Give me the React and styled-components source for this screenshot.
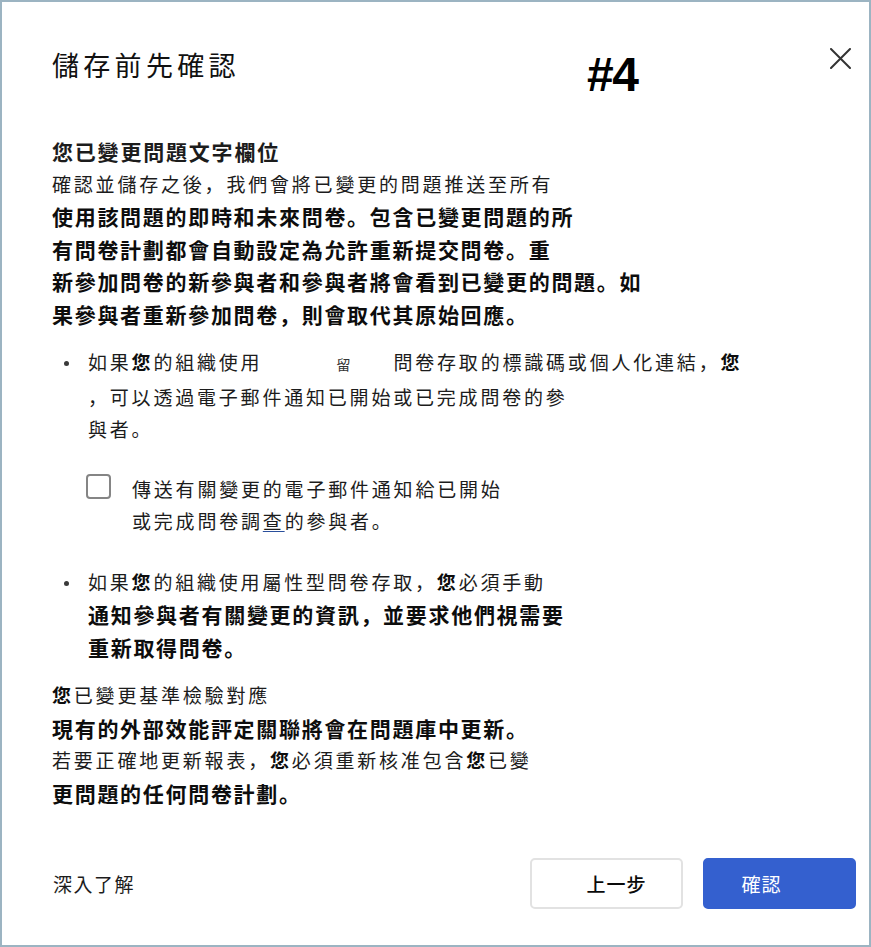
import React, { useState } from "react";
import styled, { createGlobalStyle } from "styled-components";

const GlobalStyle = createGlobalStyle`
  html, body {
    margin: 0;
    padding: 0;
    background: #ffffff;
  }
  body {
    font-family: "Noto Sans CJK JP", "Noto Sans CJK TC", "Noto Sans", sans-serif;
    color: #161616;
  }
`;

const Frame = styled.div`
  width: 871px;
  height: 947px;
  box-sizing: border-box;
  border: 2px solid #9cb4c2;
  display: flex;
  flex-direction: column;
  background: #fff;
`;

const Header = styled.div`
  display: flex;
  align-items: flex-start;
  padding: 43px 18px 0 50px;
`;

const Title = styled.h2`
  flex: 0 0 535px;
  margin: 0;
  font-size: 27px;
  line-height: 40px;
  font-weight: 400;
  letter-spacing: 4.3px;
  color: #111;
`;

const Tag = styled.div`
  margin-top: 6px;
  font-family: "Liberation Sans", Arial, sans-serif;
  font-size: 48px;
  line-height: 1;
  font-weight: 700;
  letter-spacing: -1.5px;
  color: #000;
`;

const Close = styled.button`
  margin-left: auto;
  margin-top: 2px;
  width: 22px;
  height: 22px;
  padding: 0;
  border: none;
  background: none;
  display: flex;
  align-items: center;
  justify-content: center;
  cursor: pointer;
`;

const Body = styled.div`
  padding: 36px 0 0 50px;
`;

const Section = styled.div`
  margin-bottom: ${(p) => p.$gap || 0}px;
`;

const Line = styled.div`
  white-space: nowrap;
  line-height: 32.5px;
  font-size: ${(p) => (p.$strong ? 21 : 19)}px;
  font-weight: ${(p) => (p.$strong ? 700 : 400)};
  letter-spacing: ${(p) => (p.$strong ? 1.7 : 2.8)}px;
  color: ${(p) => (p.$strong ? "#0d0d0d" : "#1c1c1c")};
  b {
    font-weight: 700;
    color: #0d0d0d;
  }
`;

const Heading = styled(Line)`
  font-size: 21px;
  font-weight: 700;
  letter-spacing: 1.8px;
`;

const List = styled.ul`
  list-style: none;
  margin: 0;
  padding: 0;
`;

const Item = styled.li`
  display: grid;
  grid-template-columns: 36px 1fr;
  margin-bottom: ${(p) => p.$gap || 0}px;
`;

const Dot = styled.span`
  width: 5px;
  height: 5px;
  border-radius: 50%;
  background: #3a3a3a;
  margin: 15px 0 0 12px;
`;

const Gap = styled.span`
  display: inline-block;
  width: ${(p) => p.$w}px;
`;

const Faint = styled.span`
  font-size: 14px;
  letter-spacing: 0;
  color: #333;
`;

const CheckRow = styled.label`
  display: flex;
  align-items: flex-start;
  gap: 21px;
  margin: 27px 0 0 -2px;
  cursor: pointer;
`;

const Box = styled.span`
  flex: 0 0 auto;
  width: 25px;
  height: 25px;
  box-sizing: border-box;
  margin-top: 1px;
  border: 2px solid #858585;
  border-radius: 4px;
  background: ${(p) => (p.$on ? "#3460cf" : "#fff")};
  display: flex;
  align-items: center;
  justify-content: center;
`;

const Marked = styled.span`
  text-decoration: underline;
  text-decoration-color: #2a4f9c;
  text-underline-offset: 2px;
`;

const Footer = styled.div`
  margin-top: auto;
  display: flex;
  align-items: center;
  padding: 0 13px 36px 51px;
`;

const LearnMore = styled.a`
  font-size: 19px;
  letter-spacing: 1.5px;
  color: #1c1c1c;
  text-decoration: none;
  cursor: pointer;
`;

const Actions = styled.div`
  margin-left: auto;
  display: flex;
  gap: 20px;
`;

const Button = styled.button`
  width: 153px;
  height: 51px;
  box-sizing: border-box;
  border-radius: 5px;
  font-family: inherit;
  font-size: 19px;
  letter-spacing: 1px;
  cursor: pointer;
  border: 2px solid ${(p) => (p.$primary ? "#3460cf" : "#e2e2e2")};
  background: ${(p) => (p.$primary ? "#3460cf" : "#fff")};
  color: ${(p) => (p.$primary ? "#fff" : "#0a0a0a")};
  font-weight: ${(p) => (p.$primary ? 400 : 500)};
  padding: ${(p) => (p.$primary ? "0 36px 0 0" : "0 0 0 20px")};
`;

export default function App() {
  const [notify, setNotify] = useState(false);

  return (
    <>
      <GlobalStyle />
      <Frame>
        <Header>
          <Title>儲存前先確認</Title>
          <Tag>#4</Tag>
          <Close aria-label="關閉">
            <svg width="21" height="21" viewBox="0 0 21 21">
              <path d="M1 1L20 20M20 1L1 20" stroke="#333" strokeWidth="2" strokeLinecap="round" />
            </svg>
          </Close>
        </Header>

        <Body>
          <Section $gap={16}>
            <Heading>您已變更問題文字欄位</Heading>
            <Line>確認並儲存之後，我們會將已變更的問題推送至所有</Line>
            <Line $strong>使用該問題的即時和未來問卷。包含已變更問題的所</Line>
            <Line $strong>有問卷計劃都會自動設定為允許重新提交問卷。重</Line>
            <Line $strong>新參加問卷的新參與者和參與者將會看到已變更的問題。如</Line>
            <Line $strong>果參與者重新參加問卷，則會取代其原始回應。</Line>
          </Section>

          <List>
            <Item $gap={28}>
              <Dot />
              <div>
                <Line>
                  如果<b>您</b>的組織使用<Gap $w={74} />
                  <Faint>留</Faint>
                  <Gap $w={43} />問卷存取的標識碼或個人化連結，<b>您</b>
                </Line>
                <Line>，可以透過電子郵件通知已開始或已完成問卷的參</Line>
                <Line>與者。</Line>
                <CheckRow onClick={() => setNotify(!notify)}>
                  <Box $on={notify}>
                    {notify && (
                      <svg width="14" height="14" viewBox="0 0 14 14">
                        <path d="M2 7.5L5.5 11L12 3.5" stroke="#fff" strokeWidth="2" fill="none" />
                      </svg>
                    )}
                  </Box>
                  <div>
                    <Line>傳送有關變更的電子郵件通知給已開始</Line>
                    <Line>
                      或完成問卷調<Marked>查</Marked>的參與者。
                    </Line>
                  </div>
                </CheckRow>
              </div>
            </Item>
            <Item $gap={16}>
              <Dot />
              <div>
                <Line>
                  如果<b>您</b>的組織使用屬性型問卷存取，<b>您</b>必須手動
                </Line>
                <Line $strong>通知參與者有關變更的資訊，並要求他們視需要</Line>
                <Line $strong>重新取得問卷。</Line>
              </div>
            </Item>
          </List>

          <Section>
            <Line>
              <b>您</b>已變更基準檢驗對應
            </Line>
            <Line $strong>現有的外部效能評定關聯將會在問題庫中更新。</Line>
            <Line>
              若要正確地更新報表，<b>您</b>必須重新核准包含<b>您</b>已變
            </Line>
            <Line $strong>更問題的任何問卷計劃。</Line>
          </Section>
        </Body>

        <Footer>
          <LearnMore>深入了解</LearnMore>
          <Actions>
            <Button>上一步</Button>
            <Button $primary>確認</Button>
          </Actions>
        </Footer>
      </Frame>
    </>
  );
}
